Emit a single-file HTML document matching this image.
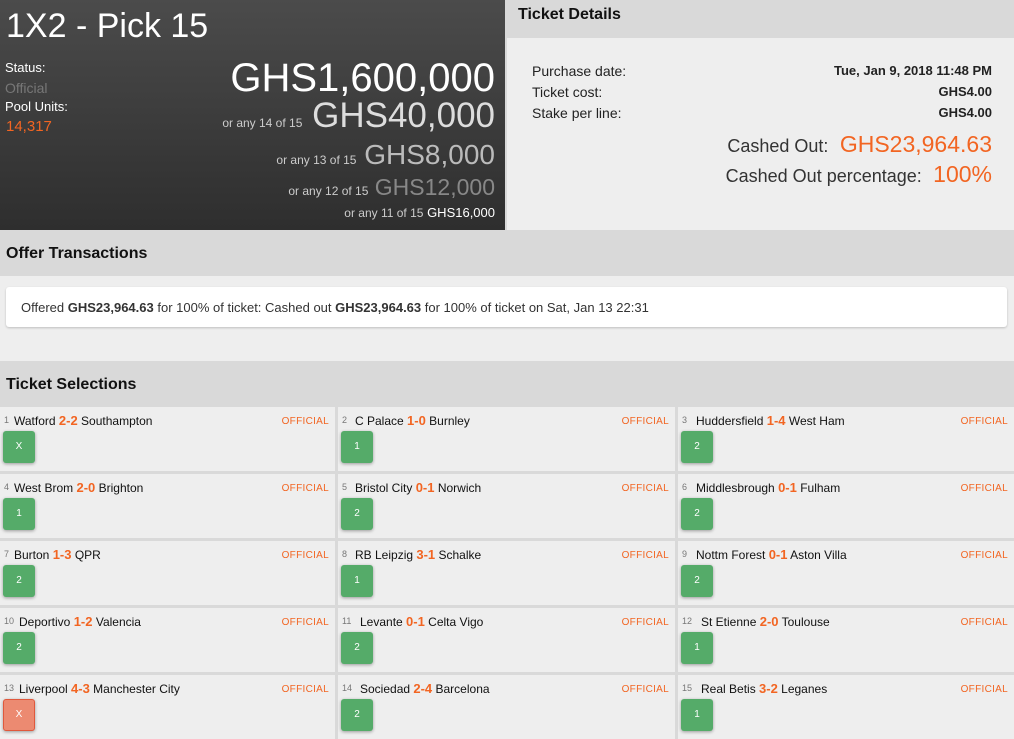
<!DOCTYPE html>
<html><head><style>
*{margin:0;padding:0;box-sizing:border-box}
body{width:1014px;height:735px;overflow:hidden;background:#d9d9d9;font-family:"Liberation Sans",Arial,sans-serif;position:relative}
.a{position:absolute;white-space:nowrap}
#left{left:0;top:0;width:505px;height:230px;background:linear-gradient(#4b4b4b,#2e2e2e);color:#fff}
.r{right:10px;text-align:right}
.sm{font-size:12px;color:#ccc}
.hdr{font-weight:bold;font-size:16px;color:#111}
.cell{position:absolute;width:335px;height:64px;background:#eee}
.cell .n{position:absolute;left:4px;top:8px;font-size:9px;color:#777}
.cell .t{position:absolute;top:6px;font-size:12px;color:#111;white-space:nowrap}
.cell .t b{color:#f26522;font-size:13px}
.cell .o{position:absolute;right:6px;top:9px;font-size:10px;color:#f26522;letter-spacing:.3px}
.cell .btn{position:absolute;left:3px;top:24px;width:32px;height:32px;border-radius:3px;background:#55ab69;color:#fff;font-size:10px;text-align:center;line-height:32px;box-shadow:0 1px 3px rgba(0,0,0,.35)}
.cell .btn.x{background:#ec8a71;border:1px solid #e0583c;line-height:30px}
</style></head><body>
<div class="a" id="left">
 <div class="a" style="left:6px;top:7px;font-size:34px">1X2 - Pick 15</div>
 <div class="a" style="left:5px;top:60px;font-size:13px">Status:</div>
 <div class="a" style="left:5px;top:80px;font-size:14px;color:#777">Official</div>
 <div class="a" style="left:5px;top:99px;font-size:13px">Pool Units:</div>
 <div class="a" style="left:6px;top:118px;font-size:15px;color:#f26522">14,317</div>
 <div class="a r" style="top:57px;font-size:40px;line-height:42px">GHS1,600,000</div>
 <div class="a r" style="top:97px;font-size:35px;line-height:38px;color:#ddd"><span class="sm">or any 14 of 15</span> GHS40,000</div>
 <div class="a r" style="top:140px;font-size:28px;line-height:30px;color:#bbb"><span class="sm">or any 13 of 15</span> GHS8,000</div>
 <div class="a r" style="top:175px;font-size:23px;line-height:25px;color:#888"><span class="sm">or any 12 of 15</span> GHS12,000</div>
 <div class="a r" style="top:205px;font-size:13px;line-height:16px;color:#fff"><span class="sm">or any 11 of 15</span> GHS16,000</div>
</div>
<div class="a" style="left:507px;top:0;width:507px;height:38px;background:#d9d9d9"><div class="a hdr" style="left:11px;top:6px">Ticket Details</div></div>
<div class="a" style="left:507px;top:38px;width:507px;height:192px;background:#eee;font-size:14px;color:#222">
 <div class="a" style="left:25px;top:25px">Purchase date:</div>
 <div class="a" style="left:25px;top:46px">Ticket cost:</div>
 <div class="a" style="left:25px;top:67px">Stake per line:</div>
 <div class="a" style="right:22px;top:25px;font-weight:bold;font-size:13px">Tue, Jan 9, 2018 11:48 PM</div>
 <div class="a" style="right:22px;top:46px;font-weight:bold;font-size:13px">GHS4.00</div>
 <div class="a" style="right:22px;top:67px;font-weight:bold;font-size:13px">GHS4.00</div>
 <div class="a" style="right:22px;top:93px;font-size:18px;color:#333">Cashed Out: <span style="color:#f26522;font-size:23px">&nbsp;GHS23,964.63</span></div>
 <div class="a" style="right:22px;top:123px;font-size:18px;color:#333">Cashed Out percentage: <span style="color:#f26522;font-size:23px">&nbsp;100%</span></div>
</div>
<div class="a hdr" style="left:6px;top:245px">Offer Transactions</div>
<div class="a" style="left:0;top:276px;width:1014px;height:85px;background:#eee"></div>
<div class="a" style="left:6px;top:287px;width:1001px;height:40px;background:#fff;border-radius:3px;box-shadow:0 1px 2px rgba(0,0,0,.2);font-size:13px;color:#333;padding:13px 0 0 15px">Offered <b>GHS23,964.63</b> for 100% of ticket: Cashed out <b>GHS23,964.63</b> for 100% of ticket on Sat, Jan 13 22:31</div>
<div class="a hdr" style="left:6px;top:376px">Ticket Selections</div>

<div class="cell" style="left:0;top:407px"><span class="n">1</span><span class="t" style="left:14px">Watford <b>2-2</b> Southampton</span><span class="o">OFFICIAL</span><div class="btn">X</div></div>
<div class="cell" style="left:338px;top:407px;width:337px"><span class="n">2</span><span class="t" style="left:17px">C Palace <b>1-0</b> Burnley</span><span class="o">OFFICIAL</span><div class="btn">1</div></div>
<div class="cell" style="left:678px;top:407px;width:336px"><span class="n">3</span><span class="t" style="left:18px">Huddersfield <b>1-4</b> West Ham</span><span class="o">OFFICIAL</span><div class="btn">2</div></div>

<div class="cell" style="left:0;top:474px"><span class="n">4</span><span class="t" style="left:14px">West Brom <b>2-0</b> Brighton</span><span class="o">OFFICIAL</span><div class="btn">1</div></div>
<div class="cell" style="left:338px;top:474px;width:337px"><span class="n">5</span><span class="t" style="left:17px">Bristol City <b>0-1</b> Norwich</span><span class="o">OFFICIAL</span><div class="btn">2</div></div>
<div class="cell" style="left:678px;top:474px;width:336px"><span class="n">6</span><span class="t" style="left:18px">Middlesbrough <b>0-1</b> Fulham</span><span class="o">OFFICIAL</span><div class="btn">2</div></div>

<div class="cell" style="left:0;top:541px"><span class="n">7</span><span class="t" style="left:14px">Burton <b>1-3</b> QPR</span><span class="o">OFFICIAL</span><div class="btn">2</div></div>
<div class="cell" style="left:338px;top:541px;width:337px"><span class="n">8</span><span class="t" style="left:17px">RB Leipzig <b>3-1</b> Schalke</span><span class="o">OFFICIAL</span><div class="btn">1</div></div>
<div class="cell" style="left:678px;top:541px;width:336px"><span class="n">9</span><span class="t" style="left:18px">Nottm Forest <b>0-1</b> Aston Villa</span><span class="o">OFFICIAL</span><div class="btn">2</div></div>

<div class="cell" style="left:0;top:608px"><span class="n">10</span><span class="t" style="left:19px">Deportivo <b>1-2</b> Valencia</span><span class="o">OFFICIAL</span><div class="btn">2</div></div>
<div class="cell" style="left:338px;top:608px;width:337px"><span class="n">11</span><span class="t" style="left:22px">Levante <b>0-1</b> Celta Vigo</span><span class="o">OFFICIAL</span><div class="btn">2</div></div>
<div class="cell" style="left:678px;top:608px;width:336px"><span class="n">12</span><span class="t" style="left:23px">St Etienne <b>2-0</b> Toulouse</span><span class="o">OFFICIAL</span><div class="btn">1</div></div>

<div class="cell" style="left:0;top:675px"><span class="n">13</span><span class="t" style="left:19px">Liverpool <b>4-3</b> Manchester City</span><span class="o">OFFICIAL</span><div class="btn x">X</div></div>
<div class="cell" style="left:338px;top:675px;width:337px"><span class="n">14</span><span class="t" style="left:22px">Sociedad <b>2-4</b> Barcelona</span><span class="o">OFFICIAL</span><div class="btn">2</div></div>
<div class="cell" style="left:678px;top:675px;width:336px"><span class="n">15</span><span class="t" style="left:23px">Real Betis <b>3-2</b> Leganes</span><span class="o">OFFICIAL</span><div class="btn">1</div></div>
</body></html>
